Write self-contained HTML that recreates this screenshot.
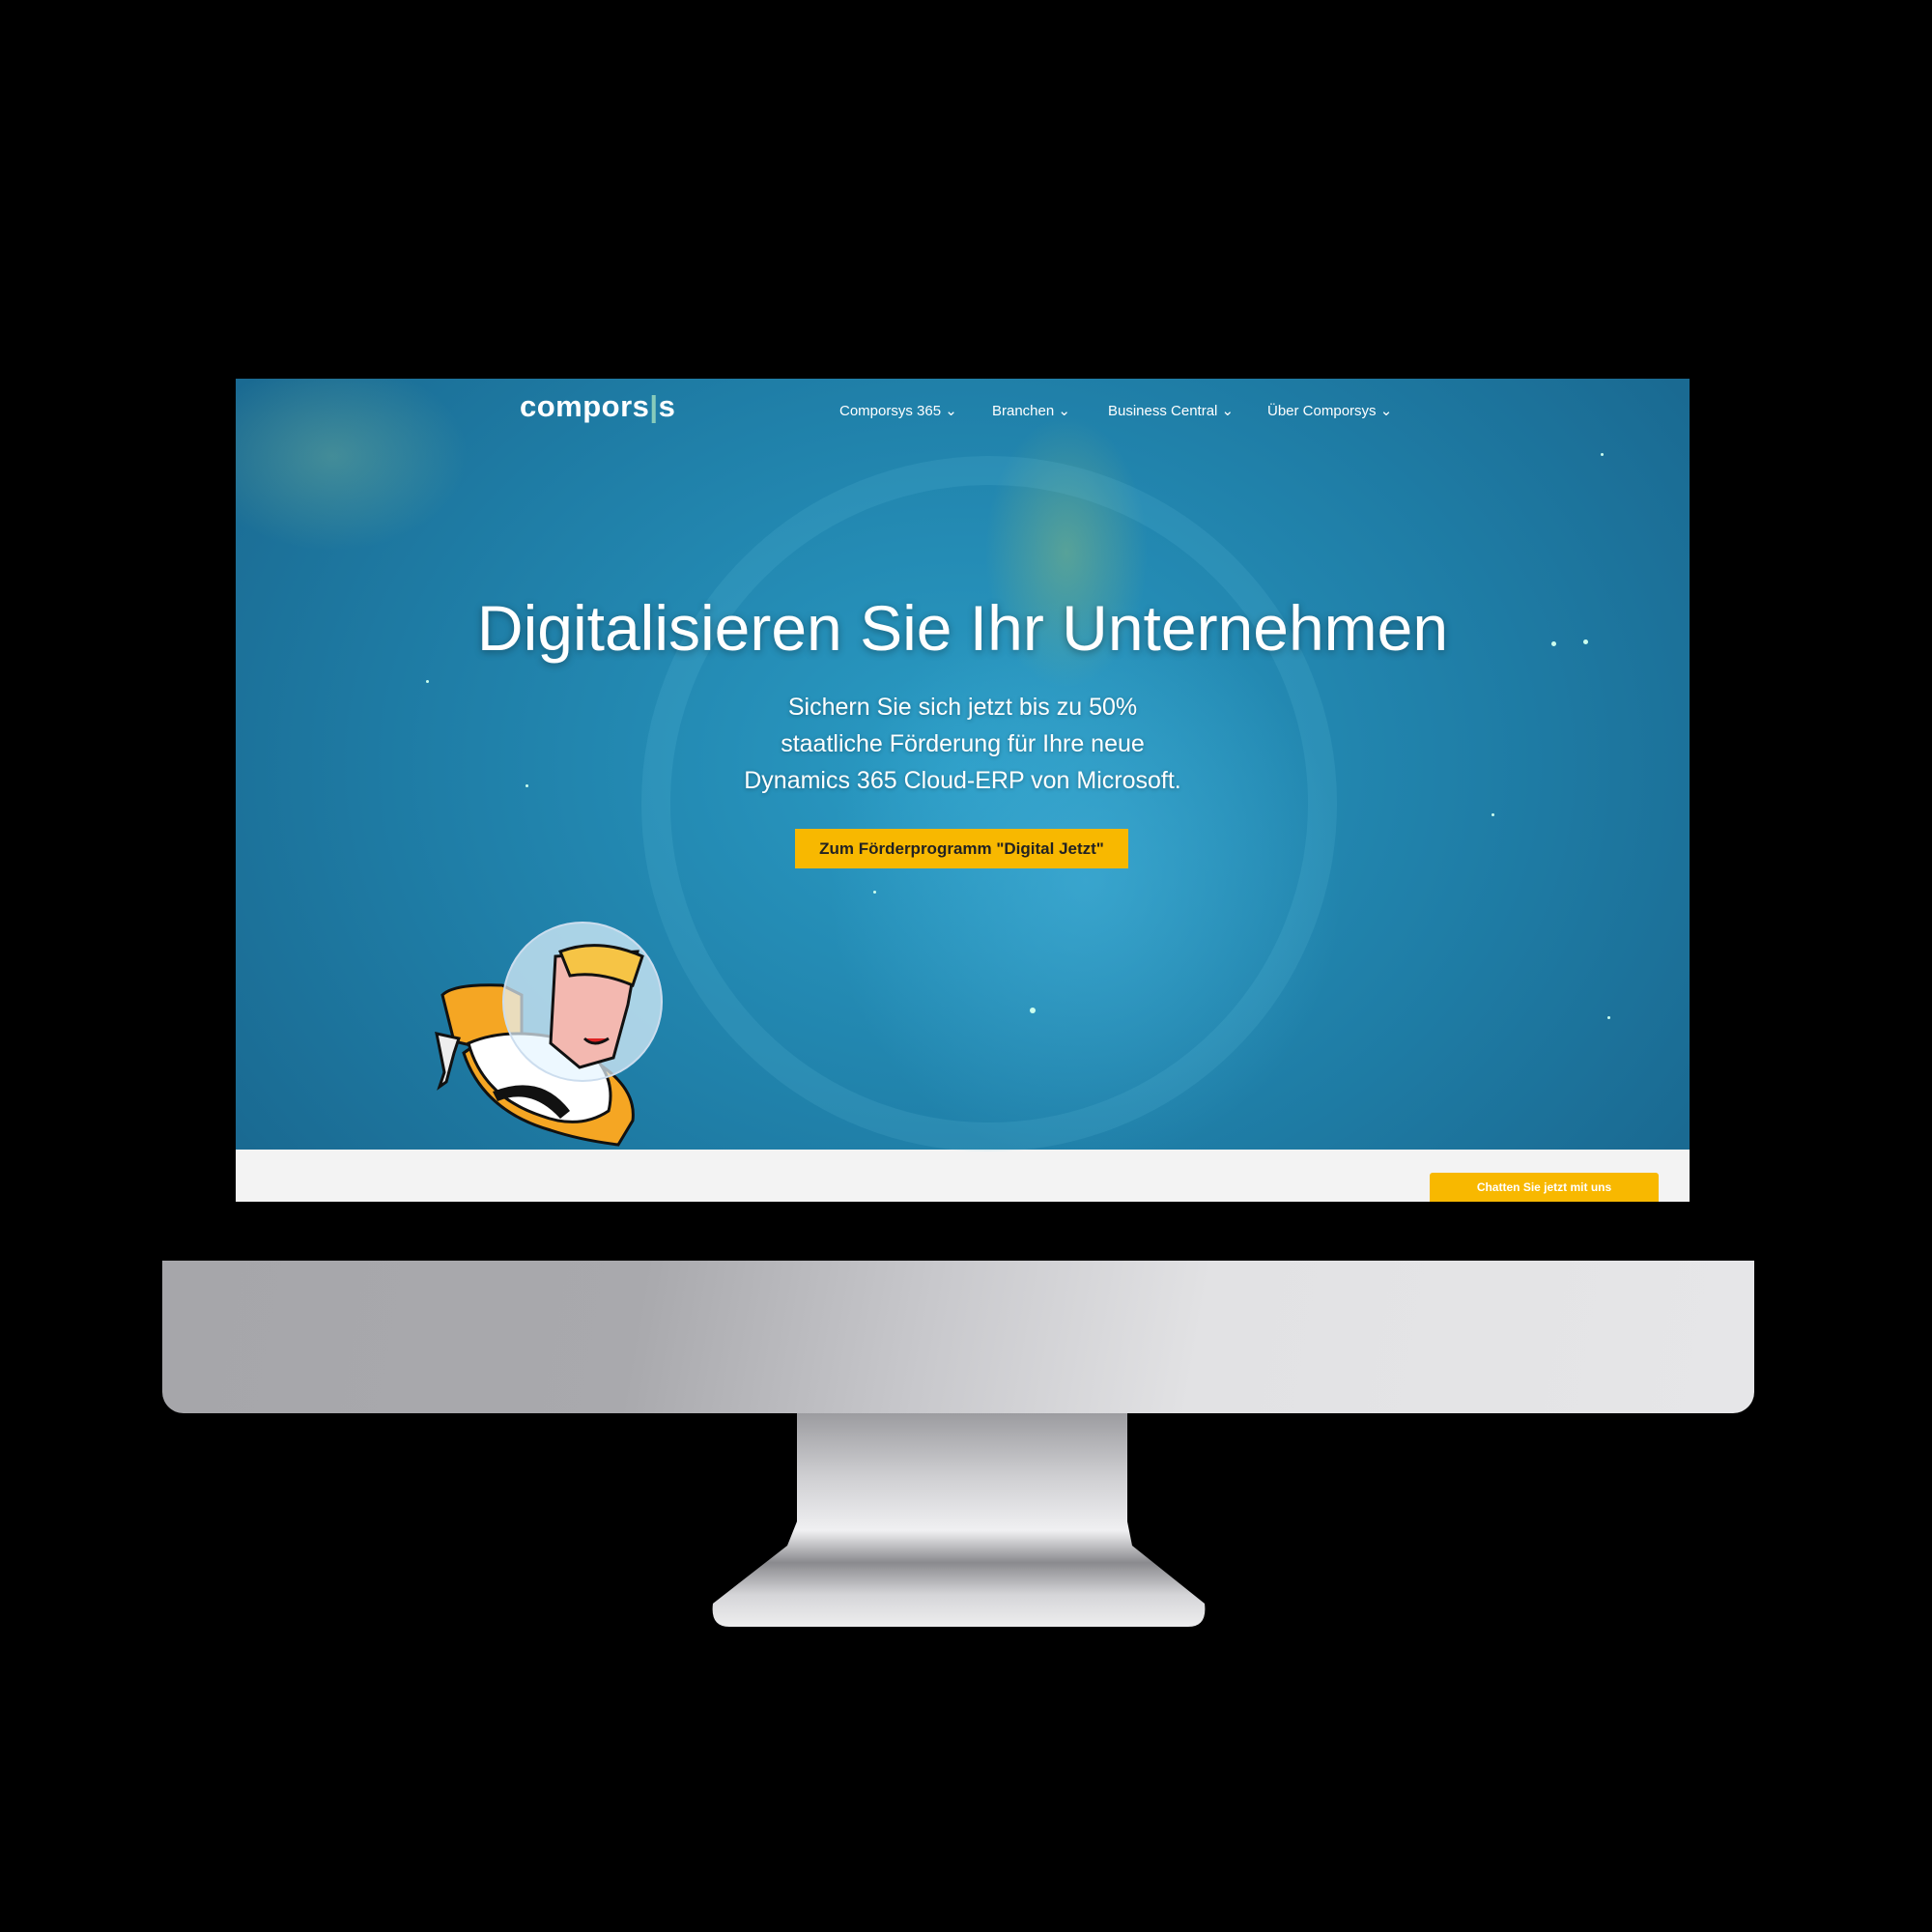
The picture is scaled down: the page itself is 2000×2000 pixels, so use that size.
<!DOCTYPE html>
<html><head><meta charset="utf-8"><style>
*{margin:0;padding:0;box-sizing:border-box}
body{width:2000px;height:2000px;background:#000;position:relative;overflow:hidden;font-family:"Liberation Sans",sans-serif}
.screen{position:absolute;left:244px;top:392px;width:1505px;height:852px;overflow:hidden;background:#f3f3f3}
.hero{position:absolute;left:0;top:0;width:1505px;height:798px;
background:
radial-gradient(ellipse 380px 420px at 880px 520px, rgba(80,190,230,.45), rgba(80,190,230,0) 70%),
radial-gradient(ellipse 120px 200px at 860px 180px, rgba(150,190,120,.45), rgba(0,0,0,0) 70%),
radial-gradient(ellipse 200px 140px at 100px 80px, rgba(140,190,150,.35), rgba(0,0,0,0) 70%),
radial-gradient(ellipse 900px 700px at 750px 400px, #2a9bc4, #1f7ea7 60%, #1a6a92 100%);}
.ring{position:absolute;left:420px;top:80px;width:720px;height:720px;border-radius:50%;border:30px solid rgba(120,210,240,.12)}
.nav{position:absolute;top:24px;color:#fff;font-size:15px;white-space:nowrap}
.logo{position:absolute;left:294px;top:11px;color:#fff;font-size:31px;font-weight:bold;letter-spacing:0.5px}
h1{position:absolute;left:0;width:1505px;top:220px;text-align:center;color:#fff;font-weight:normal;font-size:66px;text-shadow:0 2px 8px rgba(0,0,0,.35)}
.sub{position:absolute;left:0;width:1505px;top:321px;text-align:center;color:#fff;font-size:25px;line-height:38px;text-shadow:0 1px 4px rgba(0,0,0,.3)}
.btn{position:absolute;left:579px;top:466px;width:345px;height:41px;background:#f8b800;color:#222;font-weight:bold;font-size:17px;text-align:center;line-height:41px}
.chat{position:absolute;left:1236px;top:822px;width:237px;height:34px;background:#f8b800;border-radius:3px;color:#fff;font-weight:bold;font-size:12px;text-align:center;line-height:30px}
.star{position:absolute;width:3px;height:3px;background:#cfe;border-radius:50%}
</style></head><body>
<div style="position:absolute;left:168px;top:1305px;width:1648px;height:158px;border-radius:0 0 22px 22px;background:linear-gradient(100deg,#a6a6aa 0%,#a9a9ad 30%,#c8c8cc 48%,#e2e2e4 65%,#e6e6e8 100%)"></div>
<svg style="position:absolute;left:0;top:0" width="2000" height="2000">
<defs><linearGradient id="st" x1="0" y1="0" x2="0" y2="1">
<stop offset="0" stop-color="#9c9ca0"/><stop offset=".3" stop-color="#cfcfd2"/><stop offset=".55" stop-color="#f0f0f2"/><stop offset=".7" stop-color="#8a8a8e"/><stop offset=".85" stop-color="#d5d5d8"/><stop offset="1" stop-color="#eeeeef"/></linearGradient></defs>
<path d="M825 1463 L1167 1463 L1167 1575 L1172 1600 L1247 1660 Q1250 1684 1230 1684 L755 1684 Q735 1684 738 1660 L815 1600 L825 1575 Z" fill="url(#st)"/>
</svg>
<div class="screen">
<div class="hero">
<div class="ring"></div>
<div class="star" style="left:1413px;top:77px"></div><div class="star" style="left:1362px;top:272px;width:5px;height:5px"></div><div class="star" style="left:1395px;top:270px;width:5px;height:5px"></div><div class="star" style="left:822px;top:651px;width:6px;height:6px"></div><div class="star" style="left:197px;top:312px"></div><div class="star" style="left:1300px;top:450px"></div><div class="star" style="left:1420px;top:660px"></div><div class="star" style="left:660px;top:530px"></div><div class="star" style="left:300px;top:420px"></div>
<div class="logo">compors<span style="color:#8cb;">|</span>s</div>
<div class="nav" style="left:625px">Comporsys 365 ⌄</div>
<div class="nav" style="left:783px">Branchen ⌄</div>
<div class="nav" style="left:903px">Business Central ⌄</div>
<div class="nav" style="left:1068px">Über Comporsys ⌄</div>
<h1>Digitalisieren Sie Ihr Unternehmen</h1>
<div class="sub">Sichern Sie sich jetzt bis zu 50%<br>staatliche Förderung für Ihre neue<br>Dynamics 365 Cloud-ERP von Microsoft.</div>
<div class="btn">Zum Förderprogramm "Digital Jetzt"</div>
<svg style="position:absolute;left:196px;top:548px" width="260" height="250" viewBox="440 940 260 250">
<path d="M458 1030 Q470 1018 520 1020 L540 1030 L540 1075 L500 1085 L470 1078 Z" fill="#f5a623" stroke="#111" stroke-width="3"/>
<path d="M452 1070 L475 1075 L470 1090 L462 1120 L455 1125 L460 1110 Z" fill="#eee" stroke="#111" stroke-width="3"/>
<path d="M480 1090 Q520 1060 600 1090 Q660 1120 655 1160 L640 1185 Q600 1180 570 1170 Q500 1150 480 1090 Z" fill="#f5a623" stroke="#111" stroke-width="3"/>
<path d="M485 1080 Q530 1060 600 1080 Q640 1110 630 1150 Q600 1170 560 1155 Q500 1135 485 1080 Z" fill="#fff" stroke="#111" stroke-width="3"/>
<path d="M510 1130 Q560 1110 590 1150 L580 1158 Q550 1125 515 1140 Z" fill="#111"/>
<circle cx="603" cy="1037" r="82" fill="rgba(230,245,255,.7)" stroke="#cde" stroke-width="2"/>
<path d="M575 990 L660 985 L650 1040 L635 1095 L600 1105 L570 1080 Z" fill="#f3b8b0" stroke="#111" stroke-width="3"/>
<path d="M580 985 Q620 970 665 990 L655 1020 Q620 1005 590 1010 Z" fill="#f6c445" stroke="#111" stroke-width="3"/>
<path d="M605 1075 Q615 1085 630 1075" stroke="#111" stroke-width="3" fill="#d22"/>
</svg>
</div>
<div class="chat">Chatten Sie jetzt mit uns</div>
</div>
</body></html>
